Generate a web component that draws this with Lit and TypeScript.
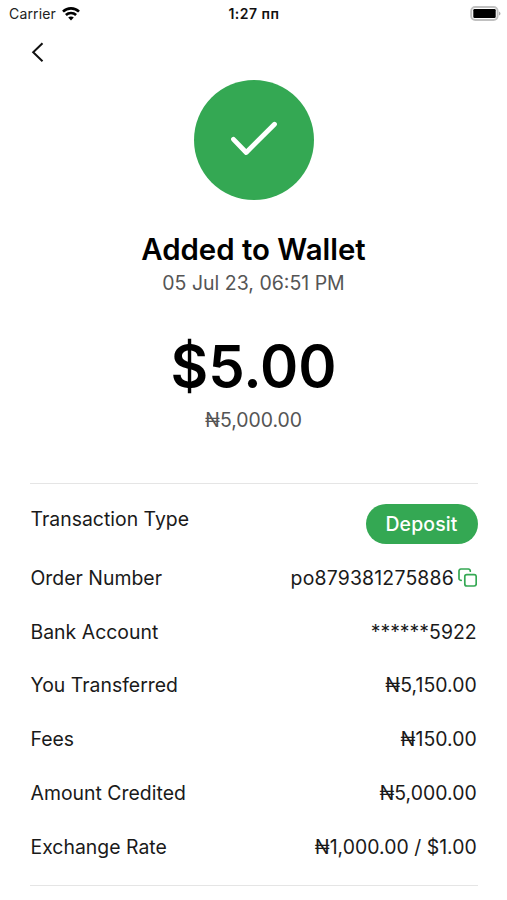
import { LitElement, html, css, svg, nothing } from "lit";
import { customElement, property } from "lit/decorators.js";

@customElement("status-bar")
class StatusBar extends LitElement {
  static styles = css`
    :host {
      display: grid;
      grid-template-columns: 1fr auto 1fr;
      align-items: center;
      height: 27px;
      padding: 0 7px 0 9px;
      font-size: 14px;
      color: #222;
    }
    .carrier { display: flex; align-items: center; gap: 6px; letter-spacing: 0.15px; }
    .clock { font-weight: 600; color: #111; letter-spacing: 0.5px; margin-right: 1px; }
    .battery { justify-self: end; margin-right: -1px; }
    svg { display: block; }
  `;
  render() {
    return html`
      <div class="carrier">
        <span>Carrier</span>
        <svg width="18" height="14" viewBox="0 0 18 14" fill="none" stroke="#000" stroke-width="2.6">
          <path d="M1 4.6C5.4 .3 12.6 .3 17 4.6" />
          <path d="M3.9 8c2.8-2.7 7.4-2.7 10.2 0" />
          <path d="M6.2 10.5c1.5-1.5 4.1-1.5 5.6 0L9 13.5z" fill="#000" stroke="none" />
        </svg>
      </div>
      <div class="clock">1:27 пп</div>
      <svg class="battery" width="31" height="15" viewBox="0 0 31 15">
        <rect x="1.2" y="1" width="26.4" height="13" rx="4" fill="#fff" stroke="#c0c0c0" stroke-width="1.9" />
        <rect x="3.3" y="3" width="22.4" height="9" rx="1.2" fill="#000" />
        <path d="M29 5.4c2 .8 2 3.4 0 4.2z" fill="#aaa" />
      </svg>
    `;
  }
}

@customElement("detail-row")
class DetailRow extends LitElement {
  @property() label = "";
  @property() value = "";
  @property() kind = "text";
  static styles = css`
    :host {
      display: flex;
      justify-content: space-between;
      align-items: center;
      height: 53.75px;
      font-size: 19.4px;
      letter-spacing: 0.02px;
      color: #1a1a1a;
    }
    :host([kind="pill"]) { height: 47.1px; align-items: flex-start; }
    :host([kind="pill"]) .label { line-height: 31px; }
    .label { padding-left: 0.5px; }
    .value { display: flex; align-items: center; gap: 4px; letter-spacing: 0.03px; padding-right: 0.8px; }
    :host([kind="copy"]) .value { letter-spacing: 0.2px; padding-right: 0.5px; }
    .pill {
      width: 112px;
      height: 39.5px;
      border-radius: 20px;
      background: #34a853;
      color: #fff;
      font-weight: 500;
      letter-spacing: 0.15px;
      display: flex;
      align-items: center;
      justify-content: center;
    }
    svg { display: block; }
  `;
  render() {
    return html`
      <span class="label">${this.label}</span>
      ${this.kind === "pill"
        ? html`<span class="pill">${this.value}</span>`
        : html`<span class="value">
            <span>${this.value}</span>
            ${this.kind === "copy" ? this.copyIcon() : nothing}
          </span>`}
    `;
  }
  copyIcon() {
    return html`<svg width="19" height="19" viewBox="0 0 19 19" fill="none" stroke="#34a853" stroke-width="1.7" stroke-linecap="round">
      ${svg`<rect x="6.8" y="6.6" width="11.4" height="11.4" rx="2" />
      <path d="M3.2 12.3H2.9a1.9 1.9 0 0 1-1.9-1.9V2.9A1.9 1.9 0 0 1 2.9 1h7.5a1.9 1.9 0 0 1 1.9 1.9v.3" />`}
    </svg>`;
  }
}

@customElement("app-root")
class AppRoot extends LitElement {
  rows = [
    { label: "Transaction Type", value: "Deposit", kind: "pill" },
    { label: "Order Number", value: "po879381275886", kind: "copy" },
    { label: "Bank Account", value: "******5922", kind: "text" },
    { label: "You Transferred", value: "₦5,150.00", kind: "text" },
    { label: "Fees", value: "₦150.00", kind: "text" },
    { label: "Amount Credited", value: "₦5,000.00", kind: "text" },
    { label: "Exchange Rate", value: "₦1,000.00 / $1.00", kind: "text" },
  ];
  static styles = css`
    :host {
      display: block;
      height: 900px;
      overflow: hidden;
      background: #fff;
      font-family: Inter, "Liberation Sans", sans-serif;
      color: #000;
    }
    .nav { height: 53px; padding: 15px 0 0 31px; box-sizing: border-box; }
    .summary { display: flex; flex-direction: column; align-items: center; }
    .badge {
      width: 120px;
      height: 120px;
      border-radius: 50%;
      background: #34a853;
    }
    h1 { margin: 31px 0 0; font-size: 29.4px; line-height: 37px; font-weight: 600; }
    .date { margin-top: 3px; font-size: 19.5px; line-height: 24px; color: #555; }
    .amount { margin-top: 35px; font-size: 58px; line-height: 72px; font-weight: 600; }
    .local { margin-top: 6px; font-size: 19.4px; line-height: 24px; color: #555; }
    .details {
      margin: 51px 29.5px 0 30px;
      padding: 20px 0 11.4px;
      border: solid #e5e5e5;
      border-width: 1px 0;
    }
    svg { display: block; }
  `;
  render() {
    return html`
      <status-bar></status-bar>
      <div class="nav">
        <svg width="14" height="21" viewBox="0 0 14 21" fill="none" stroke="#111" stroke-width="2">
          <path d="M11.5 1.2 2.2 10.2l9.3 9" />
        </svg>
      </div>
      <div class="summary">
        <div class="badge">
          <svg width="120" height="120" viewBox="0 0 120 120" fill="none" stroke="#fff" stroke-width="4.8" stroke-linecap="round" stroke-linejoin="round">
            <path d="M39.5 59.3 52.2 72.5 80.5 44.2" />
          </svg>
        </div>
        <h1>Added to Wallet</h1>
        <div class="date">05 Jul 23, 06:51 PM</div>
        <div class="amount">$5.00</div>
        <div class="local">₦5,000.00</div>
      </div>
      <div class="details">
        ${this.rows.map(
          (r) => html`<detail-row kind=${r.kind} .label=${r.label} .value=${r.value}></detail-row>`
        )}
      </div>
    `;
  }
}
